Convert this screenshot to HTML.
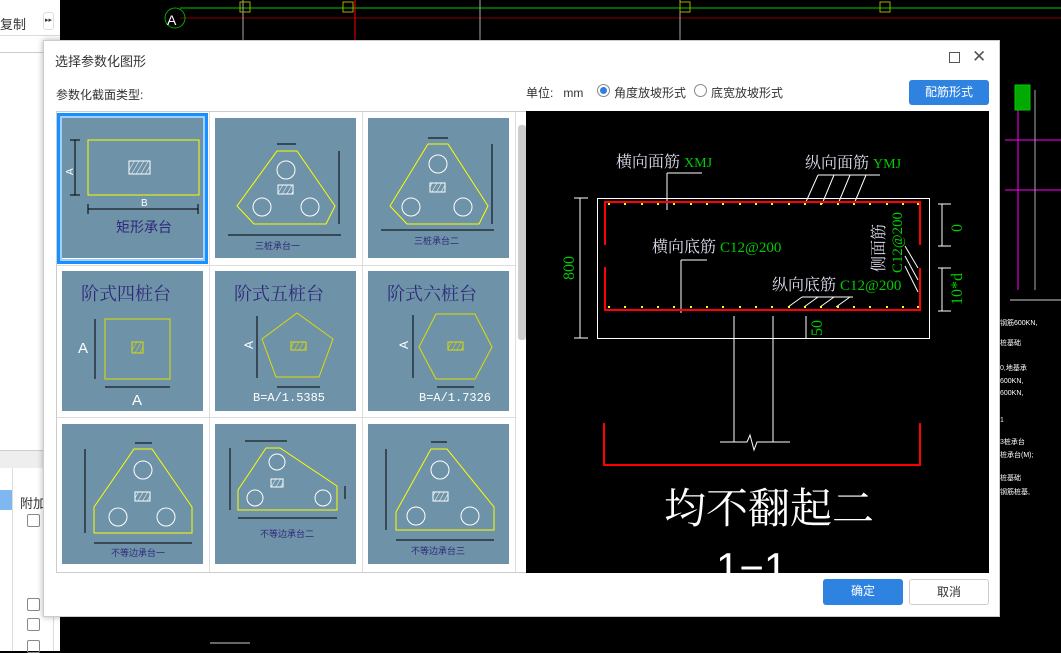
<!DOCTYPE html>
<html><head><meta charset="utf-8"><style>
*{margin:0;padding:0;box-sizing:border-box}
body{width:1061px;height:651px;overflow:hidden;background:#000;position:relative;font-family:"Liberation Sans","Noto Sans CJK SC",sans-serif;font-size:12px;color:#333}
.abs{position:absolute}
.tile{position:absolute;width:141px;height:140px;background:#6e92a7}
.btn{position:absolute;border-radius:3px;font-size:12px;text-align:center;line-height:25px}
</style></head><body>
<div class="abs" style="left:0;top:0;width:60px;height:651px;background:#fff"></div>
<div class="abs" style="left:0;top:0;width:60px;height:36px;border-bottom:1px solid #ddd"></div>
<div class="abs" style="left:0;top:14px;font-size:13px;color:#333">复制</div>
<div class="abs" style="left:43px;top:12px;width:11px;height:18px;border:1px solid #ddd;border-radius:3px;font-size:7px;line-height:16px;text-align:center">▸▸</div>
<div class="abs" style="left:0;top:52px;width:60px;height:1px;background:#ccc"></div>
<div class="abs" style="left:0;top:450px;width:60px;height:18px;background:#eee;border-top:1px solid #ccc"></div>
<div class="abs" style="left:0;top:490px;width:12px;height:20px;background:#7fb7f0"></div>
<div class="abs" style="left:20px;top:493px;font-size:13px">附加</div>
<div class="abs" style="left:12px;top:468px;width:1px;height:183px;background:#ddd"></div>
<div class="abs" style="left:53px;top:468px;width:1px;height:183px;background:#ddd"></div>
<div class="abs" style="left:27px;top:514px;width:13px;height:13px;border:1px solid #888;border-radius:2px"></div>
<div class="abs" style="left:27px;top:598px;width:13px;height:13px;border:1px solid #888;border-radius:2px"></div>
<div class="abs" style="left:27px;top:618px;width:13px;height:13px;border:1px solid #888;border-radius:2px"></div>
<div class="abs" style="left:27px;top:640px;width:13px;height:13px;border:1px solid #888;border-radius:2px"></div>
<svg class="abs" style="left:60px;top:0" width="1001" height="651">
<defs><pattern id="h" width="4" height="4" patternUnits="userSpaceOnUse" patternTransform="rotate(30)"><line x1="0" y1="0" x2="0" y2="4" stroke="#fff"/></pattern></defs>
<g stroke-width="1" fill="none">
<line x1="120" y1="8" x2="1001" y2="8" stroke="#0c0"/>
<line x1="120" y1="18" x2="1001" y2="18" stroke="#8b0000"/>
<line x1="183" y1="0" x2="183" y2="40" stroke="#aaa"/>
<line x1="295" y1="0" x2="295" y2="40" stroke="#f00"/>
<line x1="420" y1="0" x2="420" y2="40" stroke="#aaa"/>
<line x1="620" y1="0" x2="620" y2="40" stroke="#aaa"/>
<circle cx="115" cy="18" r="10" stroke="#0a0"/>
<rect x="180" y="2" width="10" height="10" stroke="#aa0"/>
<rect x="283" y="2" width="10" height="10" stroke="#aa0"/>
<rect x="620" y="2" width="10" height="10" stroke="#aa0"/>
<rect x="820" y="2" width="10" height="10" stroke="#aa0"/>
</g>
<text x="107" y="25" fill="#fff" font-size="14">A</text>
<g stroke="#fff" fill="none">
<line x1="945" y1="140" x2="1001" y2="140" stroke="#f0f"/>
<line x1="945" y1="190" x2="1001" y2="190" stroke="#f0f"/>
<line x1="958" y1="90" x2="958" y2="290" stroke="#f0f"/>
<line x1="975" y1="90" x2="975" y2="290" stroke="#aaa"/>
<rect x="955" y="85" width="15" height="25" fill="#0a0" stroke="#0c0"/>
<line x1="950" y1="300" x2="1001" y2="300" stroke="#ccc"/>
<line x1="150" y1="643" x2="190" y2="643" stroke="#ccc"/>
</g>
<g fill="#fff" font-size="7">
<text x="940" y="325">钢筋600KN,</text><text x="940" y="345">桩基础</text><text x="940" y="370">0,地基承</text><text x="940" y="383">600KN,</text><text x="940" y="395">600KN,</text><text x="940" y="422">1</text><text x="940" y="444">3桩承台</text><text x="940" y="457">桩承台(M);</text><text x="940" y="480">桩基础</text><text x="940" y="494">钢筋桩基,</text>
</g>
</svg>
<div class="abs" style="left:43px;top:40px;width:957px;height:577px;background:#fff;border:1px solid #ccc;box-shadow:0 0 6px rgba(0,0,0,.3)"></div>
<div class="abs" style="left:55px;top:51px;font-size:13px;color:#333">选择参数化图形</div>
<div class="abs" style="left:949px;top:52px;width:11px;height:11px;border:1px solid #555"></div>
<div class="abs" style="left:972px;top:48px;font-size:17px;color:#555;line-height:18px">✕</div>
<div class="abs" style="left:56px;top:86px;font-size:12px">参数化截面类型:</div>
<div class="abs" style="left:526px;top:84px;font-size:12px">单位: &nbsp;&nbsp;mm</div>
<div class="abs" style="left:597px;top:84px;width:13px;height:13px;border:1px solid #888;border-radius:50%"><div style="margin:2px;width:7px;height:7px;border-radius:50%;background:#2f7fe0"></div></div>
<div class="abs" style="left:614px;top:84px;font-size:12px">角度放坡形式</div>
<div class="abs" style="left:694px;top:84px;width:13px;height:13px;border:1px solid #888;border-radius:50%"></div>
<div class="abs" style="left:711px;top:84px;font-size:12px">底宽放坡形式</div>
<div class="btn" style="left:909px;top:80px;width:80px;height:25px;background:#2f83e0;color:#fff">配筋形式</div>
<div class="abs" style="left:56px;top:111px;width:472px;height:462px;border:1px solid #ccc;background:#fff"></div>
<div class="abs" style="left:209px;top:112px;width:1px;height:460px;background:#ddd"></div>
<div class="abs" style="left:362px;top:112px;width:1px;height:460px;background:#ddd"></div>
<div class="abs" style="left:515px;top:112px;width:1px;height:460px;background:#ddd"></div>
<div class="abs" style="left:57px;top:265px;width:458px;height:1px;background:#ddd"></div>
<div class="abs" style="left:57px;top:417px;width:458px;height:1px;background:#ddd"></div>
<div class="abs" style="left:518px;top:125px;width:8px;height:215px;background:#cdcdcd;border-radius:3px"></div>
<div class="abs" style="left:57px;top:113px;width:151px;height:151px;border:3px solid #1890ff;box-shadow:inset 0 0 0 2px #9fd0ff"></div>
<svg width="0" height="0" style="position:absolute"><defs><pattern id="hw" width="4" height="4" patternUnits="userSpaceOnUse" patternTransform="rotate(30)"><line x1="0" y1="0" x2="0" y2="4" stroke="#fff"/></pattern><pattern id="hy" width="4" height="4" patternUnits="userSpaceOnUse" patternTransform="rotate(30)"><line x1="0" y1="0" x2="0" y2="4" stroke="#dd0"/></pattern></defs></svg>
<div class="tile" style="left:62px;top:118px"><svg width="141" height="140"><g fill="none" stroke="#ff0"><rect x="26" y="22" width="111" height="55"/></g><g stroke="#000"><line x1="13" y1="22" x2="13" y2="77"/><line x1="8" y1="22" x2="18" y2="22"/><line x1="8" y1="77" x2="18" y2="77"/><line x1="26" y1="91" x2="136" y2="91"/><line x1="26" y1="86" x2="26" y2="96"/><line x1="136" y1="86" x2="136" y2="96"/></g><rect x="67" y="43" width="21" height="13" fill="url(#hw)" stroke="#fff"/><text x="3" y="55" fill="#fff" font-size="10" transform="rotate(-90 8 52)">A</text><text x="79" y="88" fill="#fff" font-size="10">B</text><text x="54" y="114" fill="#2e2a7a" font-size="14">矩形承台</text></svg></div>
<div class="tile" style="left:215px;top:118px"><svg width="141" height="140"><polygon points="62,33 82,33 120,88 111,106 39,106 22,88" fill="none" stroke="#ff0"/><g fill="none" stroke="#fff"><circle cx="71" cy="52" r="9"/><circle cx="47" cy="89" r="9"/><circle cx="95" cy="89" r="9"/><rect x="63" y="67" width="15" height="9" fill="url(#hw)"/></g><g stroke="#000"><line x1="62" y1="26" x2="81" y2="26"/><line x1="124" y1="33" x2="124" y2="106"/><line x1="13" y1="117" x2="126" y2="117"/></g><text x="40" y="131" fill="#2e2a7a" font-size="9">三桩承台一</text></svg></div>
<div class="tile" style="left:368px;top:118px"><svg width="141" height="140"><polygon points="60,26 80,26 120,88 111,106 39,106 22,88" fill="none" stroke="#ff0"/><g fill="none" stroke="#fff"><circle cx="70" cy="46" r="9"/><circle cx="43" cy="89" r="9"/><circle cx="95" cy="89" r="9"/><rect x="62" y="65" width="15" height="9" fill="url(#hw)"/></g><g stroke="#000"><line x1="60" y1="20" x2="80" y2="20"/><line x1="124" y1="26" x2="124" y2="106"/><line x1="13" y1="112" x2="126" y2="112"/></g><text x="46" y="126" fill="#2e2a7a" font-size="9">三桩承台二</text></svg></div>
<div class="tile" style="left:62px;top:271px"><svg width="141" height="140"><text x="19" y="29" fill="#2e2a7a" font-size="18" font-family="Liberation Serif,Noto Serif CJK SC,serif">阶式四桩台</text><rect x="43" y="48" width="65" height="60" fill="none" stroke="#dd0"/><rect x="70" y="71" width="11" height="11" fill="url(#hy)" stroke="#dd0"/><g stroke="#000"><line x1="33" y1="48" x2="33" y2="108"/><line x1="43" y1="116" x2="108" y2="116"/></g><text x="16" y="82" fill="#fff" font-size="15">A</text><text x="70" y="134" fill="#fff" font-size="15">A</text></svg></div>
<div class="tile" style="left:215px;top:271px"><svg width="141" height="140"><text x="19" y="29" fill="#2e2a7a" font-size="18" font-family="Liberation Serif,Noto Serif CJK SC,serif">阶式五桩台</text><polygon points="82,42 118,68 104,106 61,106 47,68" fill="none" stroke="#dd0"/><rect x="76" y="71" width="15" height="8" fill="url(#hy)" stroke="#dd0"/><g stroke="#000"><line x1="42" y1="45" x2="42" y2="107"/><line x1="62" y1="116" x2="105" y2="116"/></g><text x="38" y="130" fill="#fff" font-size="12" font-family="Liberation Mono">B=A/1.5385</text><text x="34" y="82" fill="#fff" font-size="12" transform="rotate(-90 34 78)">A</text></svg></div>
<div class="tile" style="left:368px;top:271px"><svg width="141" height="140"><text x="19" y="29" fill="#2e2a7a" font-size="18" font-family="Liberation Serif,Noto Serif CJK SC,serif">阶式六桩台</text><polygon points="68,43 107,43 124,76 107,108 68,108 51,76" fill="none" stroke="#dd0"/><rect x="80" y="71" width="15" height="8" fill="url(#hy)" stroke="#dd0"/><g stroke="#000"><line x1="45" y1="44" x2="45" y2="107"/><line x1="69" y1="116" x2="106" y2="116"/></g><text x="51" y="130" fill="#fff" font-size="12" font-family="Liberation Mono">B=A/1.7326</text><text x="36" y="82" fill="#fff" font-size="12" transform="rotate(-90 36 78)">A</text></svg></div>
<div class="tile" style="left:62px;top:424px"><svg width="141" height="140"><polygon points="72,25 90,25 130,83 130,109 32,109 32,83" fill="none" stroke="#ff0"/><g fill="none" stroke="#fff"><circle cx="81" cy="46" r="9"/><circle cx="56" cy="93" r="9"/><circle cx="104" cy="93" r="9"/><rect x="73" y="68" width="15" height="9" fill="url(#hw)"/></g><g stroke="#000"><line x1="23" y1="25" x2="23" y2="109"/><line x1="32" y1="119" x2="130" y2="119"/><line x1="73" y1="19" x2="90" y2="19"/></g><text x="49" y="132" fill="#2e2a7a" font-size="9">不等边承台一</text></svg></div>
<div class="tile" style="left:215px;top:424px"><svg width="141" height="140"><polygon points="51,24 65,24 122,62 122,86 23,86 23,66" fill="none" stroke="#ff0"/><g fill="none" stroke="#fff"><circle cx="62" cy="38" r="8"/><circle cx="40" cy="74" r="8"/><circle cx="108" cy="74" r="8"/><rect x="56" y="55" width="12" height="8" fill="url(#hw)"/></g><g stroke="#000"><line x1="15" y1="24" x2="15" y2="86"/><line x1="23" y1="94" x2="122" y2="94"/><line x1="30" y1="17" x2="72" y2="17"/><line x1="130" y1="62" x2="130" y2="75"/></g><text x="45" y="113" fill="#2e2a7a" font-size="9">不等边承台二</text></svg></div>
<div class="tile" style="left:368px;top:424px"><svg width="141" height="140"><polygon points="63,25 79,25 126,83 126,106 28,106 28,88" fill="none" stroke="#ff0"/><g fill="none" stroke="#fff"><circle cx="72" cy="46" r="9"/><circle cx="48" cy="92" r="9"/><circle cx="102" cy="92" r="9"/><rect x="65" y="68" width="15" height="9" fill="url(#hw)"/></g><g stroke="#000"><line x1="18" y1="25" x2="18" y2="106"/><line x1="28" y1="116" x2="126" y2="116"/><line x1="63" y1="18" x2="79" y2="18"/></g><text x="43" y="130" fill="#2e2a7a" font-size="9">不等边承台三</text></svg></div>
<svg class="abs" style="left:526px;top:111px" width="463" height="462" viewBox="526 111 463 462">
<rect x="526" y="111" width="463" height="462" fill="#000"/>
<g fill="none" stroke="#fff">
<rect x="597.5" y="198.5" width="332" height="140"/>
<line x1="580" y1="198" x2="580" y2="338"/><line x1="574" y1="198" x2="588" y2="198"/><line x1="574" y1="338" x2="588" y2="338"/>
<line x1="942" y1="204" x2="942" y2="246"/><line x1="938" y1="204" x2="951" y2="204"/><line x1="938" y1="246" x2="951" y2="246"/>
<line x1="942" y1="268" x2="942" y2="311"/><line x1="938" y1="268" x2="951" y2="268"/><line x1="938" y1="311" x2="951" y2="311"/>
<line x1="806" y1="316" x2="806" y2="338"/>
<line x1="667" y1="173" x2="702" y2="173"/><line x1="667" y1="173" x2="667" y2="210"/>
<line x1="818" y1="175" x2="880" y2="175"/>
<line x1="818" y1="175" x2="805" y2="204"/><line x1="834" y1="175" x2="822" y2="204"/><line x1="850" y1="175" x2="838" y2="204"/><line x1="866" y1="175" x2="854" y2="204"/>
<line x1="681" y1="260" x2="707" y2="260"/><line x1="681" y1="260" x2="681" y2="313"/>
<line x1="802" y1="297" x2="853" y2="297"/>
<line x1="802" y1="297" x2="788" y2="307"/><line x1="818" y1="297" x2="804" y2="307"/><line x1="834" y1="297" x2="820" y2="307"/><line x1="850" y1="297" x2="836" y2="307"/>
<line x1="905" y1="246" x2="918" y2="268"/><line x1="905" y1="256" x2="918" y2="280"/><line x1="905" y1="266" x2="918" y2="292"/>
<polyline points="734,316 734,442 720,442"/><polyline points="773,316 773,442 790,442 757,442 754,450 750,435 747,442 720,442"/>
</g>
<g fill="none" stroke="#f00" stroke-width="2">
<polyline points="605,245 605,202 920,202 920,245"/>
<polyline points="605,267 605,310 920,310 920,268"/>
<polyline points="604,423 604,465 920,465 920,423"/>
</g>
<g fill="#ff0">
<rect x="608" y="203" width="2" height="2"/><rect x="624" y="203" width="2" height="2"/><rect x="641" y="203" width="2" height="2"/><rect x="657" y="203" width="2" height="2"/><rect x="673" y="203" width="2" height="2"/><rect x="690" y="203" width="2" height="2"/><rect x="706" y="203" width="2" height="2"/><rect x="722" y="203" width="2" height="2"/><rect x="739" y="203" width="2" height="2"/><rect x="755" y="203" width="2" height="2"/><rect x="771" y="203" width="2" height="2"/><rect x="788" y="203" width="2" height="2"/><rect x="804" y="203" width="2" height="2"/><rect x="820" y="203" width="2" height="2"/><rect x="837" y="203" width="2" height="2"/><rect x="853" y="203" width="2" height="2"/><rect x="869" y="203" width="2" height="2"/><rect x="886" y="203" width="2" height="2"/><rect x="902" y="203" width="2" height="2"/><rect x="917" y="203" width="2" height="2"/>
<rect x="608" y="306" width="2" height="2"/><rect x="624" y="306" width="2" height="2"/><rect x="641" y="306" width="2" height="2"/><rect x="657" y="306" width="2" height="2"/><rect x="673" y="306" width="2" height="2"/><rect x="690" y="306" width="2" height="2"/><rect x="706" y="306" width="2" height="2"/><rect x="722" y="306" width="2" height="2"/><rect x="739" y="306" width="2" height="2"/><rect x="755" y="306" width="2" height="2"/><rect x="771" y="306" width="2" height="2"/><rect x="788" y="306" width="2" height="2"/><rect x="804" y="306" width="2" height="2"/><rect x="820" y="306" width="2" height="2"/><rect x="837" y="306" width="2" height="2"/><rect x="853" y="306" width="2" height="2"/><rect x="869" y="306" width="2" height="2"/><rect x="886" y="306" width="2" height="2"/><rect x="902" y="306" width="2" height="2"/><rect x="917" y="306" width="2" height="2"/>
</g>
<g font-size="16" font-family="Liberation Serif,Noto Serif CJK SC,serif">
<text x="616" y="167" fill="#dde">横向面筋 <tspan fill="#0c0" font-size="14">XMJ</tspan></text>
<text x="805" y="168" fill="#dde">纵向面筋 <tspan fill="#0c0" font-size="14">YMJ</tspan></text>
<text x="652" y="252" fill="#dde">横向底筋 <tspan fill="#0c0" font-size="15">C12@200</tspan></text>
<text x="772" y="290" fill="#dde">纵向底筋 <tspan fill="#0c0" font-size="15">C12@200</tspan></text>
<text x="0" y="0" fill="#dde" transform="translate(884,272) rotate(-90)">侧面筋</text>
<text x="0" y="0" fill="#0c0" font-size="15" textLength="61" lengthAdjust="spacingAndGlyphs" transform="translate(902,273) rotate(-90)">C12@200</text>
<text x="0" y="0" fill="#0c0" transform="translate(574,280) rotate(-90)">800</text>
<text x="0" y="0" fill="#0c0" transform="translate(962,232) rotate(-90)">0</text>
<text x="0" y="0" fill="#0c0" transform="translate(962,305) rotate(-90)">10*d</text>
<text x="0" y="0" fill="#0c0" transform="translate(822,336) rotate(-90)">50</text>
<text x="664" y="523" fill="#fff" font-size="42">均不翻起二</text>
<text x="716" y="582" fill="#fff" font-size="42" font-family="Liberation Sans,sans-serif">1−1</text>
</g>
</svg>
<div class="btn" style="left:823px;top:579px;width:80px;height:26px;background:#2f83e0;color:#fff">确定</div>
<div class="btn" style="left:909px;top:579px;width:80px;height:26px;border:1px solid #ccc;background:#fff;color:#333">取消</div>
</body></html>
